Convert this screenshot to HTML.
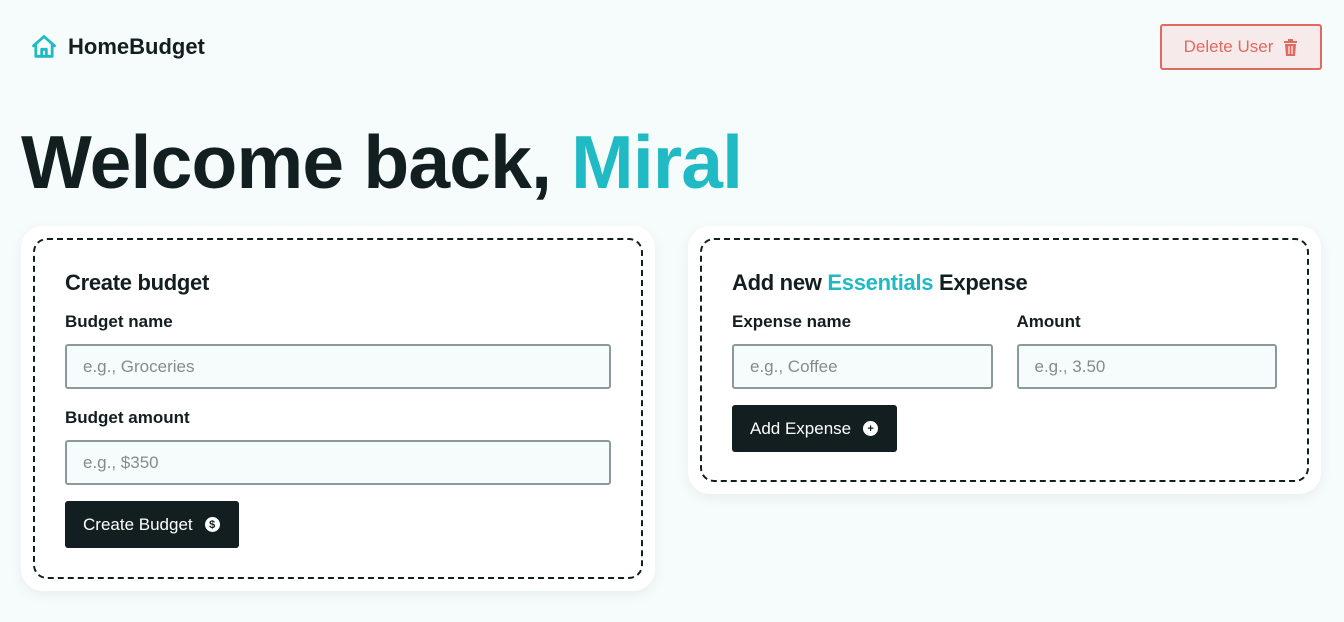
<!DOCTYPE html>
<html><head><meta charset="utf-8"><style>
*{box-sizing:border-box;margin:0;padding:0}
body{width:1344px;height:622px;background:#f6fcfc;font-family:"Liberation Sans",sans-serif;color:#121e1f;position:relative;overflow:hidden}
.abs{position:absolute}
.logo{left:30px;top:33px;display:flex;align-items:center;font-weight:bold;font-size:22px;letter-spacing:0}
.del{left:1160px;top:24px;width:162px;height:46px;border:2px solid #e06a60;border-radius:3px;background:#f7eaea;color:#e06a60;font-size:17px;display:flex;align-items:center;justify-content:center;gap:10px}
h1{position:absolute;left:21px;top:119px;font-size:75px;font-weight:bold;letter-spacing:-0.8px;white-space:nowrap}
h1 span{color:#1fbac3}
.card{position:absolute;background:#fff;border-radius:22px;box-shadow:0 4px 14px rgba(0,0,0,0.06);padding:12px}
.inner{border:2px dashed #121e1f;border-radius:14px;height:100%;padding:30px 30px;position:relative}
h2{font-size:22px;font-weight:bold;margin-bottom:16px;letter-spacing:-0.3px}
h2 span{color:#1fbac3}
label{display:block;font-weight:bold;font-size:17px;margin-bottom:12px}
.in{height:45px;border:2px solid #8a9999;border-radius:3px;background:#f6fcfc;color:#838c8c;font-size:17px;padding:0 16px;display:flex;align-items:center}
.btn{display:inline-flex;align-items:center;gap:12px;background:#121e1f;color:#fff;font-size:17px;height:47px;padding:0 19px 0 18px;border-radius:3px}
.dot{width:15px;height:15px;border-radius:50%;background:#fff;color:#121e1f;font-size:11px;font-weight:bold;display:flex;align-items:center;justify-content:center}
</style></head><body>
<div class="abs logo"><svg width="28" height="28" viewBox="0 0 24 24" fill="none" stroke="#1fbac3" stroke-width="2.4" stroke-linejoin="round" stroke-linecap="round"><path d="M3 11 L12 3 L21 11"/><path d="M5 9.5 V20 H19 V9.5"/><path d="M10 20 V14 H14 V20"/></svg><span style="margin-left:10px">HomeBudget</span></div>
<div class="abs del">Delete User <svg width="15" height="17" viewBox="0 0 15 17"><rect x="1" y="2" width="13" height="2" fill="#e06a60"/><rect x="5" y="0" width="5" height="2" fill="#e06a60"/><path d="M2 5 H13 L12 17 H3 Z" fill="#e06a60"/><rect x="5.3" y="7" width="1.3" height="8" fill="#f7eaea"/><rect x="8.4" y="7" width="1.3" height="8" fill="#f7eaea"/></svg></div>
<h1>Welcome back, <span>Miral</span></h1>
<div class="card" style="left:21px;top:226px;width:634px;height:365px"><div class="inner">
<h2>Create budget</h2>
<label>Budget name</label>
<div class="in">e.g., Groceries</div>
<label style="margin-top:19px">Budget amount</label>
<div class="in">e.g., $350</div>
<div class="btn" style="margin-top:16px">Create Budget <span class="dot">$</span></div>
</div></div>
<div class="card" style="left:688px;top:226px;width:633px;height:268px"><div class="inner">
<h2>Add new <span>Essentials</span> Expense</h2>
<div style="display:flex;gap:24px">
<div style="flex:1"><label>Expense name</label><div class="in">e.g., Coffee</div></div>
<div style="flex:1"><label>Amount</label><div class="in">e.g., 3.50</div></div>
</div>
<div class="btn" style="margin-top:16px">Add Expense <span class="dot">+</span></div>
</div></div>
</body></html>
